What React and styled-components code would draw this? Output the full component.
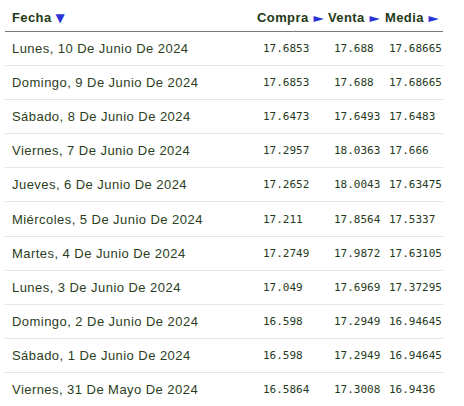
import styled, { createGlobalStyle } from "styled-components";

const GlobalStyle = createGlobalStyle`
  html, body {
    margin: 0;
    padding: 0;
    background: #ffffff;
  }
  * {
    box-sizing: border-box;
  }
`;

const rows = [
  ["Lunes, 10 De Junio De 2024", "17.6853", "17.688", "17.68665"],
  ["Domingo, 9 De Junio De 2024", "17.6853", "17.688", "17.68665"],
  ["Sábado, 8 De Junio De 2024", "17.6473", "17.6493", "17.6483"],
  ["Viernes, 7 De Junio De 2024", "17.2957", "18.0363", "17.666"],
  ["Jueves, 6 De Junio De 2024", "17.2652", "18.0043", "17.63475"],
  ["Miércoles, 5 De Junio De 2024", "17.211", "17.8564", "17.5337"],
  ["Martes, 4 De Junio De 2024", "17.2749", "17.9872", "17.63105"],
  ["Lunes, 3 De Junio De 2024", "17.049", "17.6969", "17.37295"],
  ["Domingo, 2 De Junio De 2024", "16.598", "17.2949", "16.94645"],
  ["Sábado, 1 De Junio De 2024", "16.598", "17.2949", "16.94645"],
  ["Viernes, 31 De Mayo De 2024", "16.5864", "17.3008", "16.9436"],
];

const Wrap = styled.div`
  padding: 0 21px 0 5px;
  height: 406px;
  overflow: hidden;
`;

const Table = styled.table`
  width: 438px;
  border-collapse: collapse;
  table-layout: fixed;
`;

const Th = styled.th`
  width: ${(p) => p.$w}px;
  height: 31px;
  text-align: left;
  padding: 10px 0 5px 7px;
  line-height: 14px;
  font-family: "Liberation Sans", Arial, sans-serif;
  font-size: 13px;
  font-weight: bold;
  letter-spacing: 0.4px;
  color: #1f3a17;
  border-bottom: 1px solid #7a7a7a;
  white-space: nowrap;
`;

const Arrow = styled.span`
  display: inline-block;
  color: #2a35d8;
  font-family: "DejaVu Sans", sans-serif;
  font-size: 12px;
  line-height: 14px;
  margin-left: ${(p) => (p.$down ? 4 : 5)}px;
  letter-spacing: 0;
  transform: scaleX(${(p) => (p.$down ? 1 : 1.1)});
`;

const Row = styled.tr`
  border-bottom: 1px solid #e6e6e6;
`;

const DateCell = styled.td`
  height: 34.2px;
  padding: 0 0 0 7px;
  vertical-align: middle;
  line-height: 15px;
  font-family: "Liberation Sans", Arial, sans-serif;
  font-size: 13px;
  letter-spacing: 0.45px;
  color: #2b3e22;
  white-space: nowrap;
`;

const NumCell = styled.td`
  padding: 0 0 0 ${(p) => p.$pad}px;
  vertical-align: middle;
  line-height: 15px;
  font-family: "DejaVu Sans Mono", "Liberation Mono", monospace;
  font-size: 11px;
  color: #253a1c;
  white-space: nowrap;
`;

export default function App() {
  return (
    <Wrap>
      <GlobalStyle />
      <Table>
        <thead>
          <tr>
            <Th $w={245}>
              Fecha<Arrow $down>▼</Arrow>
            </Th>
            <Th $w={71}>
              Compra<Arrow>►</Arrow>
            </Th>
            <Th $w={57}>
              Venta<Arrow>►</Arrow>
            </Th>
            <Th $w={65}>
              Media<Arrow>►</Arrow>
            </Th>
          </tr>
        </thead>
        <tbody>
          {rows.map((r) => (
            <Row key={r[0]}>
              <DateCell>{r[0]}</DateCell>
              <NumCell $pad={13}>{r[1]}</NumCell>
              <NumCell $pad={13}>{r[2]}</NumCell>
              <NumCell $pad={11}>{r[3]}</NumCell>
            </Row>
          ))}
        </tbody>
      </Table>
    </Wrap>
  );
}
